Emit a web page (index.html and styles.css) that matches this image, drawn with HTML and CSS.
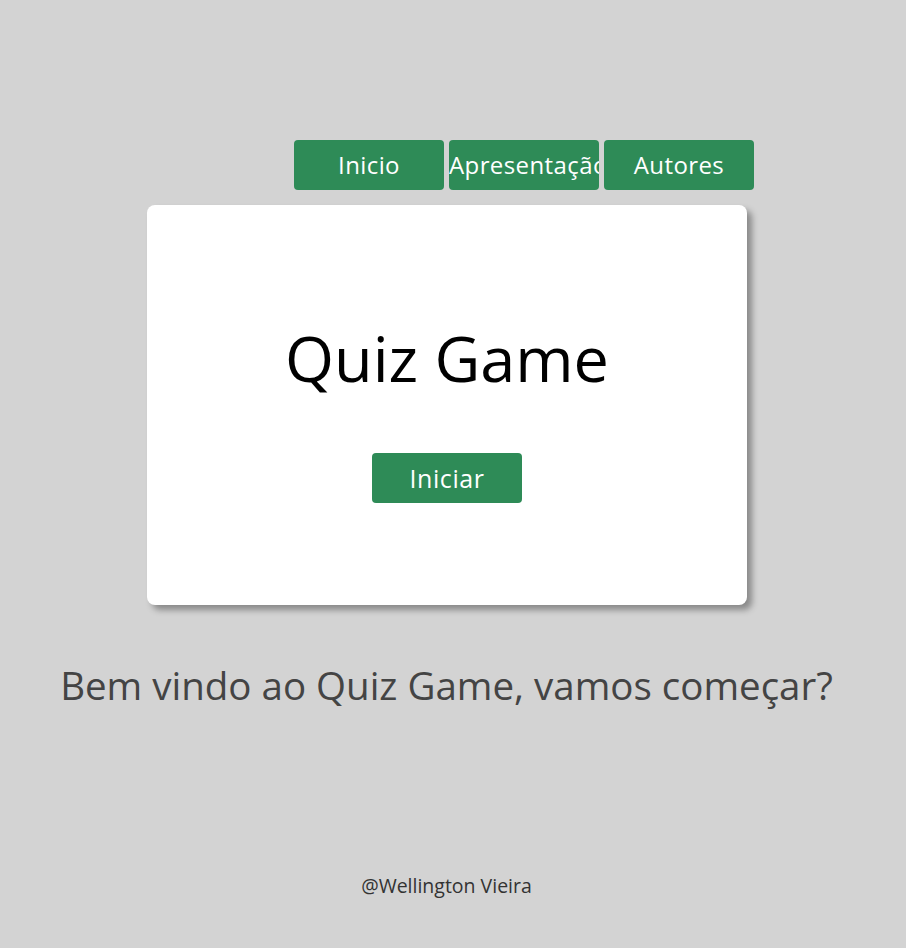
FILE: index.html
```html
<!DOCTYPE html>
<html lang="pt-BR">
<head>
<meta charset="utf-8">
<title>Quiz Game</title>
<link rel="stylesheet" href="styles.css">
</head>
<body>
  <nav class="nav">
    <a class="nav-btn" href="#">Inicio</a>
    <a class="nav-btn" href="#">Apresentação</a>
    <a class="nav-btn" href="#">Autores</a>
  </nav>
  <main class="card">
    <h1 class="title">Quiz Game</h1>
    <button class="start-btn" type="button">Iniciar</button>
  </main>
  <h2 class="welcome">Bem vindo ao Quiz Game, vamos começar?</h2>
  <footer class="footer">@Wellington Vieira</footer>
</body>
</html>
```
FILE: styles.css
```css
* { box-sizing: border-box; }

html, body {
  margin: 0;
  padding: 0;
}

body {
  background: #d3d3d3;
  font-family: "Open Sans", "Noto Sans", sans-serif;
  min-height: 948px;
  padding-right: 13px;
  display: flex;
  flex-direction: column;
}

.nav {
  display: flex;
  gap: 5px;
  padding-top: 140px;
  padding-left: 294px;
}

.nav-btn {
  display: block;
  width: 150px;
  height: 50px;
  background: #2e8b57;
  color: #fff;
  border-radius: 4px;
  text-decoration: none;
  font-size: 24px;
  letter-spacing: 0.4px;
  line-height: 50px;
  text-align: center;
  white-space: nowrap;
  overflow: hidden;
}

.card {
  width: 600px;
  height: 400px;
  margin: 15px 0 0 147px;
  background: #fff;
  border-radius: 8px;
  box-shadow: 5px 5px 6px rgba(0, 0, 0, 0.35);
  display: flex;
  flex-direction: column;
  align-items: center;
  padding-top: 108px;
}

.title {
  margin: 0;
  font-size: 63px;
  font-weight: 400;
  color: #000;
  line-height: 90px;
}

.start-btn {
  margin-top: 50px;
  width: 150px;
  height: 50px;
  border: 0;
  border-radius: 4px;
  background: #2e8b57;
  color: #fff;
  font-family: inherit;
  font-size: 25px;
  letter-spacing: 0.6px;
}

.welcome {
  margin: 50px 0 0 0;
  text-align: center;
  font-weight: 400;
  font-size: 38.5px;
  line-height: 60px;
  color: #444;
}

.footer {
  margin-top: 157px;
  text-align: center;
  font-size: 19.5px;
  color: #333;
}
```
